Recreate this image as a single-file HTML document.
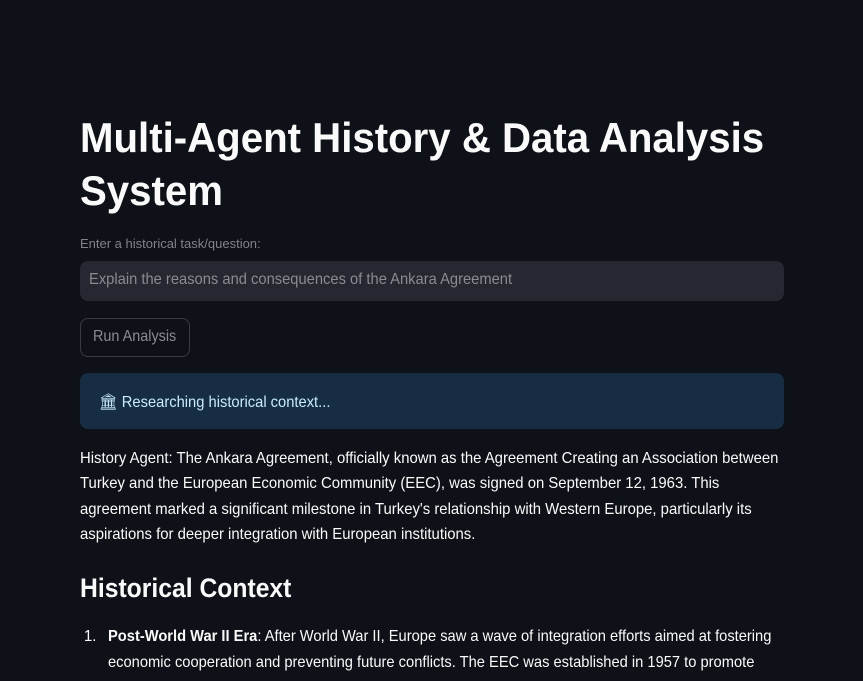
<!DOCTYPE html>
<html><head><meta charset="utf-8"><style>
html,body{margin:0;padding:0;background:#0e1117;width:863px;height:681px;overflow:hidden;font-family:"Liberation Sans",sans-serif;color:#fafafa;}
.a{position:absolute;white-space:nowrap;transform-origin:left center;}
.t{font-weight:bold;font-size:42px;line-height:53px;transform:scaleX(0.957);}
.b{font-size:16px;line-height:25px;transform:scaleX(0.93);}
</style></head><body>
<div class="a t" style="left:80px;top:111px">Multi-Agent History &amp; Data Analysis</div>
<div class="a t" style="left:80px;top:164px">System</div>
<div class="a" style="left:80px;top:236px;font-size:13px;color:#808389;transform:scaleX(1.0)">Enter a historical task/question:</div>
<div style="position:absolute;left:80px;top:261px;width:704px;height:40px;background:#262730;border-radius:8px"></div>
<div class="a" style="left:89px;top:271px;font-size:16px;color:#8a8c92;transform:scaleX(0.92)">Explain the reasons and consequences of the Ankara Agreement</div>
<div style="position:absolute;left:80px;top:318px;width:108px;height:37px;border:1px solid #3a3c44;border-radius:8px"></div>
<div class="a" style="left:93px;top:328px;font-size:16px;color:#8a8c92;transform:scaleX(0.9)">Run Analysis</div>
<div style="position:absolute;left:80px;top:373px;width:704px;height:56px;background:#172d43;border-radius:8px"></div>
<div class="a" style="left:99px;top:392px;font-size:16px;color:#c7ebff;transform:scaleX(0.92)">🏛 Researching historical context...</div>
<div class="a b" style="left:80px;top:446px">History Agent: The Ankara Agreement, officially known as the Agreement Creating an Association between</div>
<div class="a b" style="left:80px;top:471px">Turkey and the European Economic Community (EEC), was signed on September 12, 1963. This</div>
<div class="a b" style="left:80px;top:497px">agreement marked a significant milestone in Turkey's relationship with Western Europe, particularly its</div>
<div class="a b" style="left:80px;top:522px">aspirations for deeper integration with European institutions.</div>
<div class="a" style="left:80px;top:570px;font-size:27px;font-weight:bold;line-height:36px;transform:scaleX(0.915)">Historical Context</div>
<div class="a b" style="left:84px;top:624px">1.</div>
<div class="a b" style="left:108px;top:624px;transform:scaleX(0.918)"><b>Post-World War II Era</b>: After World War II, Europe saw a wave of integration efforts aimed at fostering</div>
<div class="a b" style="left:108px;top:650px;transform:scaleX(0.918)">economic cooperation and preventing future conflicts. The EEC was established in 1957 to promote</div>
</body></html>
